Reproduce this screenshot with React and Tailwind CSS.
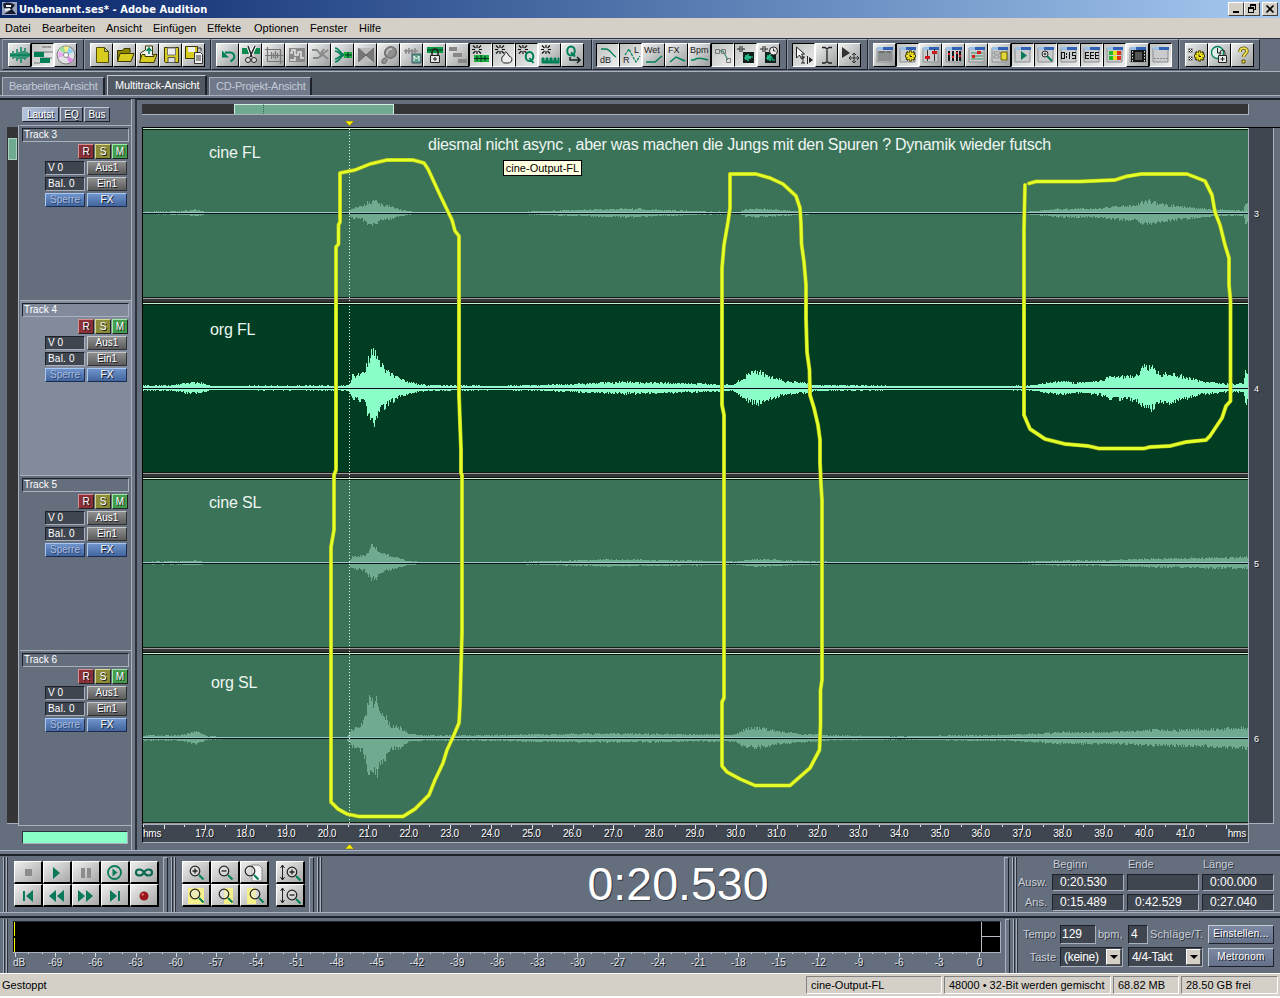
import React from "react";

const SUNK = "border border-t-[#1d2129] border-l-[#1d2129] border-b-[#a9b1bf] border-r-[#a9b1bf]";
const RAISED = "border border-t-[#c3cad6] border-l-[#c3cad6] border-b-[#1d2129] border-r-[#1d2129]";
const SHADOW = "[text-shadow:1px_1px_0_#15181f]";

/* ---------- toolbar glyphs, 22 x 22 grid ---------- */
const G = "#008058";
const win = (
  <>
    <path d="M3 4h15v14H3z" fill="#c9cbcc" stroke="#8a8d90" />
    <path d="M3 3h16v3H3z" fill="#2f62b4" />
    <path d="M3 3h6v3H3z" fill="#9cc0e8" />
  </>
);
const star = <path d="M7 1v3M7 7v3M2 5.500h3M9 5.500h3M3 1.500l2.500 2.500M8.500 7l2.500 2.500M11 1.500 8.500 4M5.500 7 3 9.500" stroke="#111" strokeWidth="1.200" />;
const gear = (
  <g>
    <path d="M13.500 6.500v11M8 12h11M9.500 8l8 8M17.500 8l-8 8" stroke="#3c3a00" strokeWidth="3" />
    <path d="M13.500 7.500v9M9 12h9M10.500 9l6 6M16.500 9l-6 6" stroke="#f0e020" strokeWidth="1.800" />
    <path d="M13 10.500v2h2" stroke="#222" />
  </g>
);
const GLYPHS = {
  wave: <path d="M2 9v4M4 7v8M6 9v5M8 5v12M10 8v7M12 3v16M14 7v8M16 4v12M18 8v6M20 9v4M1 11h20" stroke={G} strokeWidth="1.400" />,
  multi: (
    <>
      <path d="M10 3h9M2 8h19M8 14h12M2 19h6" stroke="#777" />
      <path d="M2 8h10v5H2zM8 14h10v5H8z" fill={G} />
      <path d="M11 2h3v2h-3zM16 2h3v2h-3z" fill="#999" />
    </>
  ),
  cd: (
    <>
      <circle cx="11" cy="11" r="9" fill="#dfe3e6" stroke="#777" />
      <path d="M11 11 4 5.500A9 9 0 0 1 9 2.500z" fill="#9be09b" />
      <path d="M11 11 9 2.500h5z" fill="#f7f07a" />
      <path d="m11 11 7.500 4.500A9 9 0 0 1 14 19z" fill="#e38be8" />
      <path d="m11 11-7.500-4v7z" fill="#e7a7f3" />
      <path d="m11 11 3-8 5 5z" fill="#8ed2f0" />
      <circle cx="11" cy="11" r="2.500" fill="#fff" stroke="#888" />
    </>
  ),
  neu: <path d="M5.500 3.500h8l4 4v11h-12zM13.500 3.500v4h4" fill="#d8cc20" stroke="#544e00" />,
  open: (
    <>
      <path d="M3.500 17V6.500h5l1.500-2h6v4" fill="#8f8600" stroke="#3a3600" />
      <path d="M3.500 17.500 6 9.500h14l-3 8z" fill="#d8cc20" stroke="#3a3600" />
    </>
  ),
  openup: (
    <>
      <path d="M3.500 17V9l5-3v-4h7v9h4" fill="#f4f4f4" stroke="#3a3600" />
      <path d="M12 10V4m-2.500 3L12 4l2.500 3" stroke={G} strokeWidth="1.500" />
      <path d="M2.500 18.500 5 10.500h3v2h9v-2h3l-3 8z" fill="#d8cc20" stroke="#3a3600" />
    </>
  ),
  save: (
    <>
      <path d="M4.500 3.500h14v15h-13l-1-1z" fill="#d8cc20" stroke="#3a3600" />
      <path d="M7.500 4v7h8V4z" fill="#eee" stroke="#777" />
      <path d="M8 13.500h7v5H8z" fill="#ddd" stroke="#555" />
    </>
  ),
  saveas: (
    <>
      <path d="M2.500 2.500h12v12h-12z" fill="#d8cc20" stroke="#3a3600" />
      <path d="M5 3h7v5H5z" fill="#eee" />
      <path d="M11.500 8.500h6l2 2v9h-8z" fill="#f4f4f4" stroke="#333" />
      <path d="M13 12h5M13 14h5M13 16h5M15 4h3v3" stroke="#333" />
    </>
  ),
  undo: (
    <>
      <path d="M8 8.500h5.500a4 4 0 0 1 3 6.500l-3 2.500" stroke={G} strokeWidth="2" />
      <path d="M5 6.500v7h7z" fill={G} />
    </>
  ),
  cut: (
    <>
      <path d="M2 4h7v6H2zM14 4h6v6h-6z" fill="#0b8a4f" />
      <path d="m8 2 4 11M15 2l-5 11" stroke="#fff" strokeWidth="3.500" />
      <path d="m8 2 4 11M15 2l-5 11" stroke="#222" strokeWidth="1.500" />
      <circle cx="8" cy="16" r="2.500" fill="#ddd" stroke="#222" />
      <circle cx="14" cy="16" r="2.500" fill="#ddd" stroke="#222" />
    </>
  ),
  trim: <path d="M2 5.500h15.500V20M4.500 3v14.500H20M2 11.500h18M8.500 8v7M10.500 9v5M12.500 7v8M14.500 9v5" stroke="#777" strokeWidth="1.200" />,
  frame: (
    <>
      <path d="M3 4h16v14H3z" fill="#888" />
      <path d="M4 9h2V6h3v5h3V8h3v6h3M4 16h5v-3" stroke="#e4e4e4" strokeWidth="1.500" />
    </>
  ),
  curve: <path d="M3 6h5l4 5 7-5M4 14h4c3 0 4-3 6-3l5 4M12 9l3-4" stroke="#888" strokeWidth="1.800" />,
  merge: (
    <>
      <path d="M3 4c5 0 5 7 10 7M3 18c5 0 5-7 10-7M3 7c4 0 4 4 8 4M3 15c4 0 4-4 8-4" stroke={G} strokeWidth="1.600" />
      <path d="M12 8h8v6h-8z" fill="#1fae3f" />
      <path d="M13 11h7M16 8v6" stroke="#033" />
    </>
  ),
  cross: (
    <>
      <path d="M3 4h16v14H3z" fill="#bbb" />
      <path d="M3 4l8 7-8 7zM19 4l-8 7 8 7z" fill="#777" />
      <path d="M3 18 19 4M3 4l16 14" stroke="#666" />
    </>
  ),
  lens: (
    <>
      <path d="M8 14c-4 1-5 4-3 5s4-1 4-4" fill="#999" stroke="#777" strokeWidth="1.500" />
      <ellipse cx="12.500" cy="8.500" rx="6" ry="5.500" transform="rotate(-35 12.500 8.500)" fill="#8f8f8f" stroke="#707070" strokeWidth="1.500" />
      <path d="M9 10c0-3 2-5 5-5" stroke="#c8c8c8" strokeWidth="1.500" />
    </>
  ),
  mixm: (
    <>
      <path d="M3 7h14M5 5v5M8 4v6M11 5v5M14 4v5" stroke="#888" strokeWidth="1.500" />
      <path d="M11 10h9v9h-9z" fill="#5aa08a" stroke="#456" />
      <path d="M13 17v-5l2.500 3 2.500-3v5" stroke="#fff" />
    </>
  ),
  lock: (
    <>
      <path d="M3 3h16v6H3z" fill="#0b9a3f" />
      <path d="M3 6h16" stroke="#033" />
      <path d="M8 11V8a3 3 0 0 1 6 0v3" stroke="#222" strokeWidth="1.500" />
      <path d="M6.500 11.500h9v7h-9z" fill="#e6e6e6" stroke="#222" />
      <path d="M11 13v4M9 15h4" stroke="#222" />
    </>
  ),
  blocks: <path d="M2 3h8v4H2zM6 9h9v4H6zM11 15h9v4h-9z" fill="#888" />,
  snap1: <>{star}<path d="M4 11h15v7H4z" fill="#1fae3f" /><path d="M4 14.500h15M7 12v5M11 11v7M15 12v5" stroke="#032" /></>,
  snap2: <>{star}<path d="M10 12c3-1 1-5 3-4s2 3 3 4c4 1 4 7-1 7h-3c-4 0-4-5-2-7z" fill="#eee" stroke="#222" /></>,
  snapq: <>{star}<path d="M13.500 8c5 0 5 9 0 9s-5-9 0-9m0 6 4 5" stroke={G} strokeWidth="2" /></>,
  snap3: <>{star}<path d="M3 19v-5h2v3h2v-3h2v3h2v-3h2v3h2v-3h2v3h2v-3h1v5z" fill={G} stroke={G} /></>,
  q: (
    <>
      <path d="M9 2.500c5 0 5 9 0 9s-5-9 0-9m0 6 4 4" stroke={G} strokeWidth="2" />
      <path d="M8 13v3h10m-3-3 3 3-3 3" stroke="#122" strokeWidth="1.500" />
    </>
  ),
  db: <path d="M4 5h5c4 0 5 5 10 8" stroke={G} strokeWidth="1.300" />,
  rl: <path d="m5 11 4-6 4 8 3 5 4-6" stroke={G} strokeWidth="1.200" strokeDasharray="3 1" />,
  wet: <path d="M3 18h9l7-6" stroke={G} strokeWidth="1.500" />,
  fx: <path d="m4 18 6-5 9 4" stroke={G} strokeWidth="1.500" />,
  bpm: <path d="M2 16h3c3-3 8-2 14 0" stroke={G} strokeWidth="1.500" />,
  env: <><path d="M7 7h4l5 9" stroke={G} /><path d="M3.500 5.500h4v4h-4zM9.500 5.500h4v4h-4zM14.500 14.500h4v4h-4z" stroke="#777" /></>,
  clip: <><path d="M2 5h3m2 0h3M5 2v6M7 2v6" stroke="#222" /><path d="M8 8h11v11H8z" fill="#10201c" /><path d="M9 14h2v-3v5-3h2v-3v7-4h2v-1v3-2h3" stroke="#25d09a" /></>,
  clipc: (
    <>
      <path d="M2 5h3m2 0h3M5 2v6M7 2v6" stroke="#222" />
      <path d="M7 8h11v11H7z" fill="#10201c" />
      <path d="M8 14h2v-3v5-3h2v-3v7-4h2v3h3" stroke="#25d09a" />
      <circle cx="15.500" cy="7" r="4" fill="#eee" stroke="#222" />
      <path d="M15.500 4.500V7h2" stroke="#222" />
    </>
  ),
  hyb: (
    <>
      <path d="M3.500 3v11l3-3 2 4 2-1-2-4h3z" fill="#fff" stroke="#222" />
      <path d="M8 13h4m-2 0v6m-2 0h4M14.500 12v8" stroke="#222" />
      <path d="m16 13 4 3-4 3z" fill="#222" />
    </>
  ),
  ibeam: <path d="M6 3.500h3l2 1.500 2-1.500h3M11 4.500v14M6 19h3l2-1.500 2 1.500h3" stroke="#222" strokeWidth="1.300" />,
  move: (
    <>
      <path d="M3 3v11l8-5z" fill="#333" />
      <path d="M15 9v10M10 14h10m-7-3 2-2 2 2m-4 6 2 2 2-2m-5-5-2 2 2 2m6-4 2 2-2 2" stroke="#333" />
    </>
  ),
  w1: <>{win}<path d="M4 7h14v10H4z" fill="#8c8f90" /><path d="M5 8h6M13 8h4" stroke="#555" /></>,
  w2: <>{win}{gear}</>,
  w3: <>{win}<path d="M7.500 6v11M14.500 5v12" stroke="#333" /><path d="M5 12h5v3H5zM12 7h5v3h-5z" fill="#cc1818" /></>,
  w4: <>{win}<path d="M6 7v10M10 7v10M14 7v10M17 7v10" stroke="#181818" strokeWidth="2" /><path d="M5 10h2M9 13h2M13 9h2M16 12h2" stroke="#e02020" strokeWidth="2" /></>,
  w5: <>{win}<path d="M5 9h12M5 12h12M5 15h12" stroke="#3a8f6a" /><path d="M11 7h4v3h-4zM6 11h3v3H6z" fill="#d02020" /></>,
  w6: <>{win}<path d="M5 8h6v2H5zM5 12h5v2H5z" fill="#eee" stroke="#888" /><path d="M12 8h6v8h-6z" fill="#e2d838" stroke="#665f00" /></>,
  w7: <>{win}<path d="m9 7 6 4.500L9 16z" fill="#0a7a5a" /></>,
  w8: <>{win}<circle cx="10" cy="10" r="3" stroke="#222" fill="#eee" /><path d="M8.500 10h3M10 8.500v3" stroke="#222" /><path d="m12 12 5 5" stroke={G} strokeWidth="2" /></>,
  w9: (
    <>
      {win}
      <g fill="#111" shapeRendering="crispEdges">
        <path d="M3 8h4v7H3zM4 9v5h2V9z" fillRule="evenodd" />
        <path d="M8 9h1v2H8zM8 12h1v2H8zM11 8h1v7h-1zM14 8h4v1h-3v2h3v4h-4v-1h3v-2h-3z" />
      </g>
    </>
  ),
  w10: (
    <>
      {win}
      <path d="M4 8h4v1H4zM4 11h4v1H4zM4 14h4v1H4zM4 8h1v7H4zM9 8h4v1H9zM9 11h4v1H9zM9 14h4v1H9zM9 8h1v7H9zM14 8h4v1h-4zM14 11h4v1h-4zM14 14h4v1h-4zM14 8h1v7h-1z" fill="#111" shapeRendering="crispEdges" />
    </>
  ),
  w11: <>{win}<path d="M5 7h4v4H5zM5 12h4v4H5z" fill="#22b830" /><path d="M9 7h4v4H9zM9 12h4v4H9z" fill="#e8e020" /><path d="M13 7h4v4h-4zM13 12h4v4h-4z" fill="#e03020" /></>,
  w12: <>{win}<path d="M4 6h15v12H4z" fill="#151515" /><path d="M5.500 7v11M17.500 7v11" stroke="#ddd" strokeDasharray="1.500 1.500" /><path d="M8 8h7v8H8z" fill="#555" /></>,
  w13: <>{win}<path d="M4 14.500h14" stroke="#888" strokeDasharray="2 1" /></>,
  opt: <>{gear}<path d="M2.500 4.500h4v4h-4zM2.500 12.500h4v4h-4z" fill="#fff" stroke="#999" /><path d="m3 5 3 3M6 5 3 8M3 13l3 3M6 13l-3 3" stroke="#222" /></>,
  clocklock: (
    <>
      <circle cx="8.500" cy="8.500" r="6" fill="#dff0ec" stroke={G} strokeWidth="1.300" />
      <path d="M8.500 4v5h4" stroke="#222" />
      <path d="M11 11V8.500a2.500 2.500 0 0 1 5 0V11" stroke="#222" />
      <path d="M9.500 11.500h8v7h-8z" fill="#e6e6e6" stroke="#222" />
      <path d="M13.500 13v4M11.500 15h4" stroke="#222" />
    </>
  ),
  help: (
    <>
      <path d="M8 8c0-5 7-5 7-1 0 3-3.500 3-3.500 6" stroke="#5a5200" strokeWidth="3.400" />
      <path d="M8 8c0-5 7-5 7-1 0 3-3.500 3-3.500 6" stroke="#f0e45a" strokeWidth="1.800" />
      <path d="M10 16h3v3h-3z" fill="#f0e45a" stroke="#5a5200" />
    </>
  ),
};

const CAPTIONS = {
  db: ["dB", 3, 19], rl: ["L", 14, 9], wet: ["Wet", 1, 9], fx: ["FX", 2, 9], bpm: ["Bpm", 1, 9],
};

function ToolButton({ name, on }) {
  const cap = CAPTIONS[name];
  return (
    <div
      className={
        "h-[24px] w-[23px] border " +
        (on
          ? "border-t-black border-l-black border-b-white border-r-white bg-linear-to-br from-[#bfc1c1] to-[#ededed]"
          : "border-t-white border-l-white border-b-black border-r-black bg-linear-to-br from-[#f0f0f0] to-[#9c9fa0]")
      }
    >
      <svg viewBox="0 0 21 22" className="h-[22px] w-[21px]" fill="none">
        {GLYPHS[name]}
        {cap && <text x={cap[1]} y={cap[2]} fontSize="9" fontFamily="Liberation Sans, sans-serif" fill="#222">{cap[0]}</text>}
        {name === "rl" && <text x="3" y="19" fontSize="9" fontFamily="Liberation Sans, sans-serif" fill="#222">R</text>}
      </svg>
    </div>
  );
}

const GROUPS = [
  { w: "w-[82px] pl-[5px]", items: ["wave", "*multi", "cd"] },
  { w: "w-[127px] pl-[5px]", items: ["neu", "open", "openup", "save", "saveas"] },
  { w: "w-[381px] pl-[4px]", items: ["undo", "cut", "trim", "frame", "curve", "merge", "cross", "lens", "mixm", "lock", "blocks", "*snap1", "*snap2", "*snapq", "snap3", "q"] },
  { w: "w-[195px] pl-[3px]", items: ["*db", "*rl", "wet", "fx", "bpm", "*env", "*clip", "clipc"] },
  { w: "w-[81px] pl-[4px]", items: ["*hyb", "ibeam", "move"] },
  { w: "w-[311px] pl-[4px]", items: ["w1", "*w2", "w3", "w4", "w5", "w6", "*w7", "*w8", "*w9", "*w10", "*w11", "w12", "*w13"] },
  { w: "w-[81px] pl-[5px]", items: ["opt", "clocklock", "help"] },
];

/* ---------- waveforms ---------- */
const WAVES = [
  [[143, 1.5], [180, 2], [196, 4], [206, 1], [348, 1], [351, 6], [362, 8], [368, 13], [375, 14], [380, 10], [392, 7], [403, 3], [418, 1], [510, 1], [545, 2.5], [630, 5], [690, 2.5], [738, 1], [745, 4], [757, 5], [775, 4], [800, 2], [820, 1], [1020, 1], [1060, 5], [1095, 5], [1120, 8], [1135, 9], [1147, 15], [1158, 11], [1185, 7], [1210, 4], [1243, 3], [1245, 11], [1248, 11]],
  [[143, 3], [170, 3], [190, 6.5], [200, 6], [210, 2.5], [240, 2.5], [345, 3], [350, 6], [352, 14], [364, 17], [368, 34], [371, 43], [375, 41], [379, 29], [386, 22], [394, 14], [405, 9], [415, 5], [427, 3.5], [500, 2.5], [560, 4], [600, 6], [625, 7], [700, 5], [733, 3.5], [742, 12], [750, 17], [758, 19], [768, 14], [785, 8], [805, 6], [813, 3.5], [870, 3], [890, 2.5], [1010, 2.5], [1030, 3], [1060, 8], [1075, 6], [1100, 8], [1111, 14], [1125, 13], [1137, 16], [1143, 25], [1151, 26], [1160, 16], [1168, 18], [1185, 13], [1200, 8], [1225, 5], [1243, 5], [1245, 18], [1248, 18]],
  [[143, 1.5], [180, 2], [196, 3], [206, 1], [348, 1], [352, 7], [364, 9], [370, 19], [375, 21], [381, 11], [394, 7], [405, 3], [418, 1.5], [520, 1.5], [600, 4], [660, 3.5], [735, 2], [755, 4.5], [790, 3], [830, 1.5], [1020, 1.5], [1060, 3], [1100, 3], [1150, 5], [1210, 6], [1248, 7]],
  [[143, 3], [175, 3], [188, 5], [196, 8], [208, 2], [240, 1], [346, 1], [351, 10], [356, 12], [362, 16], [366, 32], [369, 45], [375, 45], [379, 37], [384, 28], [390, 14], [400, 12], [408, 5], [425, 3], [470, 3], [520, 4], [590, 5], [650, 5], [700, 4], [735, 4], [745, 11], [757, 12], [775, 8], [800, 5], [830, 3], [900, 2], [1020, 4], [1060, 7], [1100, 7], [1150, 9], [1200, 10], [1248, 12]],
];

function wavePath(env, seed) {
  let s = seed;
  const rnd = () => {
    s = (s * 1103515245 + 12345) % 2147483648;
    return s / 2147483648;
  };
  let k = 0;
  let d = "";
  for (let x = 143; x < 1248; x++) {
    while (k < env.length - 2 && x >= env[k + 1][0]) k++;
    const [x0, a] = env[k];
    const [x1, b] = env[k + 1];
    const v = a + ((b - a) * (x - x0)) / (x1 - x0);
    const up = Math.round(v * (0.66 + 0.34 * rnd()));
    const dn = Math.round(v * (0.62 + 0.36 * rnd()));
    if (up + dn > 0) d += `M${x - 143} ${85 - up}h1v${up + dn}h-1z`;
  }
  return d;
}

const TRACKS = [
  { name: "Track 3", label: "cine FL", at: "left-[66px] top-[15px]" },
  { name: "Track 4", label: "org FL", at: "left-[67px] top-[17px]", active: true },
  { name: "Track 5", label: "cine SL", at: "left-[66px] top-[15px]" },
  { name: "Track 6", label: "org SL", at: "left-[68px] top-[20px]" },
];

function TrackControls({ t }) {
  const btn = "flex h-[14px] w-[40px] items-center justify-center text-[10px] leading-none text-white";
  const grey = "border border-t-[#c8c8c8] border-l-[#c8c8c8] border-b-[#303030] border-r-[#303030] bg-linear-to-b from-[#8f8f8f] to-[#5c5c5c] ";
  const blue = "border border-t-[#a8c8f4] border-l-[#a8c8f4] border-b-[#1b2c50] border-r-[#1b2c50] bg-linear-to-b from-[#6f93cc] to-[#42659c] ";
  const sq = "flex h-[15px] w-[16px] items-center justify-center border border-b-[#222] border-r-[#222] text-[10px] leading-none text-white ";
  return (
    <div className={"h-[175px] border-t border-[#a9b1bf] pt-[2px] pl-[2px] " + (t.active ? "bg-[#818b9b]" : "bg-[#646e7c]")}>
      <div className={"flex h-[14px] w-[107px] items-center pl-[1px] text-[10px] leading-none text-white " + SUNK}>{t.name}</div>
      <div className={"mt-[2px] flex justify-end gap-[1px] pr-[3px] " + SHADOW}>
        <div className={sq + "border-t-[#d89090] border-l-[#d89090] bg-[#8c3038]"}>R</div>
        <div className={sq + "border-t-[#d8d890] border-l-[#d8d890] bg-[#8c8c38]"}>S</div>
        <div className={sq + "border-t-[#a0e8a8] border-l-[#a0e8a8] bg-[#449c4c]"}>M</div>
      </div>
      <div className="mt-[2px] ml-[23px] grid w-[82px] grid-cols-2 gap-x-[2px] gap-y-[2px]">
        <div className={"flex h-[14px] w-[40px] items-center bg-[#404650] pl-[2px] text-[10px] leading-none text-white " + SUNK}>V 0</div>
        <div className={btn + " " + grey + SHADOW}>Aus1</div>
        <div className={"flex h-[14px] w-[40px] items-center bg-[#404650] pl-[2px] text-[10px] leading-none tracking-[0.2px] whitespace-nowrap text-white " + SUNK}>Bal. 0</div>
        <div className={btn + " " + grey + SHADOW}>Ein1</div>
        <div className={btn + " " + blue}><span className="text-[#a9bbda] [text-shadow:1px_1px_0_#2c4a80]">Sperre</span></div>
        <div className={btn + " " + blue + SHADOW}>FX</div>
      </div>
    </div>
  );
}

function Lane({ t, i }) {
  return (
    <div className={"relative h-[175px] w-[1106px] overflow-hidden border-l border-black " + (t.active ? "bg-[#003d22]" : "bg-[#3b7359]")}>
      <svg className="block h-[175px] w-[1105px]" viewBox="0 0 1105 175" shapeRendering="crispEdges">
        <rect width="1105" height="1" fill="#c9f2cf" />
        <rect y="1" width="1105" height="1" fill="#0a140e" />
        <path d={wavePath(WAVES[i], 77 + i * 991)} fill={t.active ? "#8affc8" : "#70aa90"} />
        <rect y="84" width="1105" height="1" fill={t.active ? "#a6e8e4" : "#98c8d0"} />
        <rect y="85" width="1105" height="1" fill="#04140e" />
        <rect y="169" width="1105" height="1" fill="#101c16" />
        <rect y="170" width="1105" height="1" fill="#9a9a9a" />
        <rect y="171" width="1105" height="3" fill="#353537" />
        <rect y="174" width="1105" height="1" fill="#0a140e" />
      </svg>
      <span className={"absolute text-[16px] leading-[20px] tracking-[-0.15px] whitespace-nowrap text-[#eef6f2] " + t.at}>{t.label}</span>
    </div>
  );
}

const MARKS = [
  "M340 173 355 170 370 164 387 160H413L424 163 428 169 440 195 452 220 455 231 459 236V395L461 450V473L462 475V632L461 668 460 705 459 723 453 737 447 750 443 763 435 780 429 795 415 809 403 816.500H359L347 814 338 809 331 802V547L334 530V475L336 470V247L338.500 244V225L340 222Z",
  "M730 174H756L770 178 783 184 796 196 800 208 801 224 801.500 244 804 262 806 285V318L807 352 809.500 370 810 395 814 408 818 425 820 440V462L821 485 822 500V680L820.500 690V725L819.500 750 810 768 790 785.500H755L740 779 727 772 722 766V702L724 698V415L722 405V268L724 245 728 222 730 208Z",
  "M1029 183.500 1036 181.500H1080L1115 180 1126 176.500 1141 174H1187L1205 181 1212 195 1215 212 1220 225 1225 245 1229 258V285L1230.500 300V401L1226 406 1222 418 1210 436 1206 440 1186 442 1170 446 1150 447 1144 448.500H1099L1088 446 1065 444 1045 439 1030 429 1024 415V229L1025 185",
];

/* ---------- transport glyphs, 28 x 21 grid ---------- */
const mag = (inner) => (
  <>
    <circle cx="13" cy="9" r="4.800" fill="#e8e8e0" fillOpacity="0.500" stroke="#222" strokeWidth="1.200" />
    {inner && <path d={inner} stroke="#222" strokeWidth="1.300" />}
    <path d="m17 13 4.500 4.500" stroke={G} strokeWidth="2" />
  </>
);
const T = {
  stop: <path d="M11 7h7v7h-7z" fill="#8c8c8c" />,
  play: <path d="m10 5 7 6-7 6z" fill="#0a7a5a" />,
  pause: <path d="M9 6h4v10H9zM15 6h4v10h-4z" fill="#8c8c8c" />,
  playc: <><circle cx="13.500" cy="10.500" r="6.500" stroke="#0a7a5a" strokeWidth="1.800" /><path d="m11.500 6.500 5 4-5 4z" fill="#0a7a5a" /></>,
  loop: <path d="M14 10.500c-2-4-8-4-8 0s6 4 8 0 8-4 8 0-6 4-8 0z" stroke="#0a6a50" strokeWidth="2.200" />,
  begin: <path d="M9 6h2v10H9zM19 5v12l-7-6z" fill="#0a7a5a" />,
  rew: <path d="M13 5v12l-7-6zM21 5v12l-7-6z" fill="#0a7a5a" />,
  ffw: <path d="m6 5 7 6-7 6zM14 5l7 6-7 6z" fill="#0a7a5a" />,
  end: <path d="m9 5 7 6-7 6zM17 6h2v10h-2z" fill="#0a7a5a" />,
  rec: <><circle cx="14" cy="11" r="4.500" fill="#981818" /><circle cx="12.700" cy="9.500" r="1.200" fill="#e07070" /></>,
  zin: mag("M10.500 9h5M13 6.500v5"),
  zout: mag("M10.500 9h5"),
  zpage: <><path d="M12 3h7l3 3v13H12z" fill="#f6f6f6" stroke="#888" /><g transform="translate(-3 0)">{mag()}</g></>,
  zsel: <><path d="M6 3h16v16H6z" fill="#f5f08a" />{mag()}</>,
  zl: <><path d="M13 3h9v16h-9z" fill="#f5f08a" />{mag()}</>,
  zr: <><path d="M7 3h9v16H7z" fill="#f5f08a" /><g transform="translate(2 0)">{mag()}</g></>,
  vin: <><path d="M6.500 4v14M4.500 6l2-3 2 3m-4 9 2 3 2-3" stroke="#222" /><g transform="translate(3 1)">{mag("M10.500 9h5M13 6.500v5")}</g></>,
  vout: <><path d="M6.500 4v14M4.500 6l2-3 2 3m-4 9 2 3 2-3" stroke="#222" /><g transform="translate(3 1)">{mag("M10.500 9h5")}</g></>,
};

function Pad({ name }) {
  return (
    <div className="h-[23px] w-[29px] border-t border-l border-r-2 border-b-2 border-t-white border-l-white border-r-black border-b-black bg-linear-to-br from-[#eeeeee] to-[#a8a8a8]">
      <svg viewBox="1 0 26 20" className="h-[20px] w-[26px]" fill="none">{T[name]}</svg>
    </div>
  );
}

const Grip = () => (
  <div className="flex gap-[1px]">
    <div className="w-[2px] border-l border-[#a9b1bf] bg-[#2c313b]" />
    <div className="w-[2px] border-l border-[#a9b1bf] bg-[#2c313b]" />
  </div>
);
const Splitter = () => <div className="w-[5px] border-x border-t border-l-[#a9b1bf] border-t-[#a9b1bf] border-r-[#1d2129] bg-[#6d7787]" />;

const Field = ({ children, className }) => (
  <div className={"flex items-center bg-[#404650] leading-none text-white " + SUNK + " " + className}>{children}</div>
);

function Combo({ children, className }) {
  return (
    <div className={"flex h-[20px] items-center justify-between bg-[#404650] pr-[1px] pl-[3px] text-[12px] leading-none tracking-[-0.3px] text-white " + SUNK + " " + className}>
      <span>{children}</span>
      <div className="flex h-[16px] w-[15px] items-center justify-center border border-t-white border-l-white border-r-[#555] border-b-[#555] bg-[#d4d0c8]">
        <svg viewBox="0 0 8 4" className="h-[4px] w-[8px]"><path d="M0 0h8L4 4z" fill="#000" /></svg>
      </div>
    </div>
  );
}

const RULER = Array.from({ length: 25 }, (_, i) => 17 + i);
const DBS = Array.from({ length: 24 }, (_, i) => i * 3 - 69);
const MENU = [["Datei", "w-[37px]"], ["Bearbeiten", "w-[64px]"], ["Ansicht", "w-[47px]"], ["Einfügen", "w-[54px]"], ["Effekte", "w-[47px]"], ["Optionen", "w-[56px]"], ["Fenster", "w-[49px]"], ["Hilfe", "w-[40px]"]];
const lbl = "text-[11px] leading-none text-[#c9ced8] [text-shadow:1px_1px_0_#30353f] whitespace-nowrap";
const wbtn = "flex h-[14px] items-center justify-center border border-t-white border-l-white border-r-[#404040] border-b-[#404040] bg-[#d4d0c8]";

export default function App() {
  return (
    <div className="h-[998px] w-[1280px] overflow-hidden bg-[#646e7c] font-['Liberation_Sans',Arial,sans-serif]">
      {/* title bar */}
      <div className="flex h-[18px] items-center bg-linear-to-r from-[#0a246a] to-[#a6caf0] pl-[2px]">
        <svg viewBox="0 0 16 16" className="h-[16px] w-[16px]">
          <rect y="1" width="15" height="13" fill="#9aa4bc" />
          <path d="M1 3c4-3 9-1 12 1l-3 4-8-1zM2 13l8-5 4 5z" fill="#151a2c" />
          <path d="M4 5h5M3 9l5-1" stroke="#f2f2f2" strokeWidth="2" />
        </svg>
        <span className="ml-[1px] w-[189px] font-['DejaVu_Sans_Condensed','DejaVu_Sans',sans-serif] text-[11px] leading-none font-bold tracking-[0.08px] whitespace-nowrap text-white">Unbenannt.ses* - Adobe Audition</span>
        <div className="mr-[2px] ml-auto flex">
          <div className={wbtn + " w-[16px]"}><svg viewBox="0 0 10 10" className="h-[10px] w-[10px]"><path d="M2 7h6v2H2z" /></svg></div>
          <div className={wbtn + " w-[16px]"}>
            <svg viewBox="0 0 10 10" className="h-[10px] w-[10px]" fill="#000" shapeRendering="crispEdges">
              <path d="M3 0h6v6H7V5h1V2H4v1H3zM1 3h6v6H1zM2 5v3h4V5z" fillRule="evenodd" />
            </svg>
          </div>
          <div className={wbtn + " ml-[2px] w-[16px]"}><svg viewBox="0 0 10 10" className="h-[10px] w-[10px]"><path d="m1.500 1.500 7 7m0-7-7 7" stroke="#000" strokeWidth="1.700" /></svg></div>
        </div>
      </div>

      {/* menu */}
      <div className="flex h-[20px] items-center bg-[#d4d0c8] pl-[5px] text-[11px] leading-none text-black">
        {MENU.map(([m, w]) => <span key={m} className={w + " whitespace-nowrap"}>{m}</span>)}
      </div>

      {/* tool bar */}
      <div className="flex h-[33px] border-t border-[#2c313b] pl-[2px]">
        {GROUPS.map((g, i) => (
          <div key={i} className={"flex h-[31px] border-t border-l border-r border-b border-t-[#a9b1bf] border-l-[#8d96a6] border-b-[#1d2129] border-r-[#1d2129] pt-[3px] " + g.w}>
            {g.items.map((n) => <ToolButton key={n} name={n.replace("*", "")} on={n[0] === "*"} />)}
          </div>
        ))}
      </div>

      {/* view tabs */}
      <div className="h-[28px] border-t border-[#a9b1bf] bg-[#505862] pt-[3px]">
        <div className="flex h-[20px] items-end pl-[2px] text-[11px] leading-none whitespace-nowrap">
          <div className="flex h-[18px] w-[103px] items-center border-t border-r-2 border-l border-t-[#a9b1bf] border-l-[#a9b1bf] border-r-[#1d2129] bg-[#6f7989] pl-[6px] tracking-[-0.25px] text-[#c3cad6]">Bearbeiten-Ansicht</div>
          <div className="ml-[2px] flex h-[20px] w-[100px] items-center border-t border-r-2 border-l border-t-[#c3cad6] border-l-[#c3cad6] border-r-[#1d2129] bg-[#505862] pl-[7px] tracking-[-0.13px] text-white">Multitrack-Ansicht</div>
          <div className="ml-[2px] flex h-[18px] w-[103px] items-center border-t border-r-2 border-l border-t-[#a9b1bf] border-l-[#a9b1bf] border-r-[#1d2129] bg-[#6f7989] pl-[6px] tracking-[-0.22px] text-[#c3cad6]">CD-Projekt-Ansicht</div>
        </div>
        <div className="h-[5px] border-t border-b-2 border-t-[#a9b1bf] border-b-[#1d2129] bg-[#6d7787]" />
      </div>

      {/* session */}
      <div className="flex h-[751px]">
        <div className="w-[131px]">
          <div className={"flex h-[26px] gap-[1px] pt-[8px] pl-[22px] text-[10px] leading-none text-white " + SHADOW}>
            <div className={"flex h-[15px] w-[37px] items-center justify-center bg-linear-to-r from-[#b4c3dc] to-[#8e9db8] " + RAISED}>Lautst</div>
            <div className={"flex h-[15px] w-[23px] items-center justify-center bg-[#727c8e] " + RAISED}>EQ</div>
            <div className={"flex h-[15px] w-[26px] items-center justify-center bg-[#727c8e] " + RAISED}>Bus</div>
          </div>
          <div className="flex">
            <div className="mt-[2px] ml-[7px] h-[697px] w-[11px] border-b border-[#a9b1bf] bg-[#353537] pt-[11px] pl-[1px]">
              <div className="h-[22px] w-[9px] border border-[#a8d4c0] bg-[#70aa90]" />
            </div>
            <div className="w-[113px] border-b border-l border-[#a9b1bf] pl-px">
              {TRACKS.map((t) => <TrackControls key={t.name} t={t} />)}
            </div>
          </div>
          <div className="mt-[5px] ml-[22px] h-[13px] w-[106px] border border-t-[#2c313b] border-l-[#2c313b] border-r-[#a9b1bf] border-b-[#a9b1bf] bg-[#8affc8]" />
        </div>
        <div className="h-[751px] w-[6px] border-l border-r-2 border-l-[#a9b1bf] border-r-[#2c313b] bg-[#6d7787]" />
        <div className="w-[1143px] pl-[5px]">
          <div className="mt-[5px] flex h-[11px] w-[1107px] border-r border-b border-[#a9b1bf] bg-[#353537] pl-[92px]">
            <div className="h-[10px] w-[29px] border-t border-l border-[#d0efe0] bg-[#70aa90]" />
            <div className="h-[10px] w-[131px] border-t border-r border-l border-t-[#d0efe0] border-r-[#d0efe0] border-l-[#2d6e50] bg-[#70aa90] [border-left-style:dotted]" />
          </div>
          <div className="flex h-[12px] items-end pl-[202px]">
            <svg viewBox="0 0 11 6" className="h-[6px] w-[11px]"><path d="M1 0h9L5.500 5z" fill="#ffee00" stroke="#55500a" strokeWidth="0.500" /></svg>
          </div>
          <div className="relative flex h-[697px] border-t border-black">
            <div className="h-[696px] w-[1106px] overflow-hidden">
              {TRACKS.map((t, i) => <Lane key={t.name} t={t} i={i} />)}
            </div>
            <div className={"h-[696px] w-[26px] border-x border-b border-[#a9b1bf] bg-[#404650] text-[9px] leading-none text-white " + SHADOW}>
              {[3, 4, 5, 6].map((n) => <div key={n} className="h-[175px] pt-[82px] pl-[5px]">{n}</div>)}
            </div>
            <svg className="absolute top-0 left-0 h-[696px] w-[1106px]" viewBox="142 128 1106 696" fill="none">
              <path d="M349.500 129V823" stroke="#e8ffe8" strokeDasharray="1 2" shapeRendering="crispEdges" />
              {MARKS.map((d, i) => (
                <g key={i} strokeLinejoin="round" strokeLinecap="round">
                  <path d={d} stroke="#a8b820" strokeWidth="4" />
                  <path d={d} stroke="#e4ff28" strokeWidth="2.800" />
                </g>
              ))}
            </svg>
            <span className="absolute top-[7px] left-[286px] w-[623px] text-[16px] leading-[20px] tracking-[-0.245px] whitespace-nowrap text-[#eef6f2]">diesmal nicht async , aber was machen die Jungs mit den Spuren ? Dynamik wieder futsch</span>
            <div className="absolute top-[32px] left-[361px] flex h-[16px] w-[79px] items-center justify-center border border-black bg-[#ffffe1] text-[11px] leading-none whitespace-nowrap text-black">cine-Output-FL</div>
          </div>
          <div className="h-[19px] w-[1107px] border-t border-r border-b border-l border-[#a9b1bf] border-l-black bg-[#404650]">
            <div className={"relative flex h-[17px] items-end pb-[3px] text-[10px] leading-none text-white " + SHADOW}>
              <svg className="absolute top-0 left-0 h-[4px] w-[1105px]" viewBox="0 0 1105 4" shapeRendering="crispEdges">
                {Array.from({ length: 54 }, (_, i) => <rect key={i} x={Math.round(0.4 + i * 20.435)} width="1" height={i % 2 ? 4 : 2} fill="#e0e4ea" />)}
              </svg>
              <span className="w-[41px] tracking-[-0.2px]">hms</span>
              {RULER.map((n) => <span key={n} className="w-[40.87px] text-center tracking-[-0.3px]">{n}.0</span>)}
              <span className="ml-auto pr-[2px] tracking-[-0.2px]">hms</span>
            </div>
          </div>
          <div className="flex h-[8px] items-start pl-[202px]">
            <svg viewBox="0 0 11 6" className="h-[6px] w-[11px]"><path d="M1 6h9L5.500 1z" fill="#ffee00" stroke="#55500a" strokeWidth="0.500" /></svg>
          </div>
        </div>
      </div>
      <div className="h-[6px] border-t border-b-2 border-t-[#a9b1bf] border-b-[#1d2129] bg-[#6d7787]" />

      {/* transport row */}
      <div className="flex h-[56px] pt-[1px] pl-[3px]">
        <Grip />
        <div className="mt-[4px] ml-[6px] grid h-[46px] w-[145px] grid-cols-5">
          {["stop", "play", "pause", "playc", "loop", "begin", "rew", "ffw", "end", "rec"].map((n) => <Pad key={n} name={n} />)}
        </div>
        <div className="ml-[4px] flex"><Splitter /></div>
        <div className="ml-[3px] flex"><Grip /></div>
        <div className="mt-[4px] ml-[6px] grid h-[46px] w-[87px] grid-cols-3">
          {["zin", "zout", "zpage", "zsel", "zl", "zr"].map((n) => <Pad key={n} name={n} />)}
        </div>
        <div className="mt-[4px] ml-[7px] h-[46px] w-[29px]">
          <Pad name="vin" />
          <Pad name="vout" />
        </div>
        <div className="ml-[4px] flex"><Splitter /></div>
        <div className="ml-[3px] flex"><Grip /></div>
        <div className="flex w-[682px] items-center justify-center pl-[30px] text-[46.5px] leading-none text-white [text-shadow:1px_1px_0_#30353f]">0:20.530</div>
        <Splitter />
        <div className="ml-[3px] flex"><Grip /></div>
        <div className="ml-[1px] w-[258px]">
          <div className={"flex h-[15px] items-center pl-[35px] " + lbl}>
            <span className="w-[75px]">Beginn</span>
            <span className="w-[75px]">Ende</span>
            <span>Länge</span>
          </div>
          {[["Ausw.", "0:20.530", "", "0:00.000"], ["Ans.", "0:15.489", "0:42.529", "0:27.040"]].map(([a, b, c, d]) => (
            <div key={a} className="flex h-[20px] items-center gap-[3px]">
              <span className={"w-[31px] pr-[2px] text-right " + lbl}>{a}</span>
              <Field className="h-[17px] w-[72px] pl-[7px] text-[12px]">{b}</Field>
              <Field className="h-[17px] w-[72px] pl-[7px] text-[12px]">{c}</Field>
              <Field className="h-[17px] w-[72px] pl-[7px] text-[12px]">{d}</Field>
            </div>
          ))}
        </div>
      </div>
      <div className="h-[6px] border-t border-b-2 border-t-[#a9b1bf] border-b-[#1d2129] bg-[#6d7787]" />

      {/* level meter row */}
      <div className="flex h-[55px] pt-[1px] pl-[3px]">
        <Grip />
        <div className="ml-[5px] w-[988px] pt-[2px]">
          <div className="flex h-[32px] border-t border-r border-b border-[#a9b1bf] border-t-[#1d2129] bg-black">
            <div className="ml-[1px] flex w-[1px] flex-col justify-between bg-black">
              <div className="h-[14px] bg-[#ffff00]" />
              <div className="h-[14px] bg-[#ffff00]" />
            </div>
            <div className="ml-auto w-[19px] border-l border-[#b8bcc4]">
              <div className="h-[15px] border-b border-[#b8bcc4]" />
            </div>
          </div>
          <svg className="block h-[4px] w-[988px]" viewBox="0 0 988 4" shapeRendering="crispEdges">
            {Array.from({ length: 73 }, (_, i) => <rect key={i} x={Math.round(2 + i * 13.39)} width="1" height={i % 3 ? 1 : 4} fill="#d5d9e0" />)}
          </svg>
          <div className={"flex pt-[1px] text-[10px] leading-none text-[#e2e5ea] " + SHADOW}>
            <span className="w-[22px] shrink-0">dB</span>
            {DBS.map((n) => <span key={n} className="w-[40.19px] shrink-0 text-center">{n}</span>)}
          </div>
        </div>
        <div className="ml-[4px] flex"><Splitter /></div>
        <div className="ml-[3px] flex"><Grip /></div>
        <div className="pt-[5px] pl-[1px]">
          <div className="flex h-[20px] items-center">
            <span className={"w-[38px] pr-[1px] text-right " + lbl}>Tempo</span>
            <Field className="ml-[3px] h-[19px] w-[36px] pl-[1px] text-[12px]">129</Field>
            <span className={"ml-[2px] w-[30px] " + lbl}>bpm,</span>
            <Field className="h-[19px] w-[20px] pl-[2px] text-[12px]">4</Field>
            <span className={"ml-[2px] w-[57px] tracking-[0.2px] " + lbl}>Schläge/T.</span>
            <div className={"ml-[1px] flex h-[19px] w-[66px] items-center justify-center bg-linear-to-b from-[#7d88a2] to-[#657089] text-[10px] leading-none tracking-[0.3px] text-white " + RAISED + " " + SHADOW}>Einstellen...</div>
          </div>
          <div className="mt-[3px] flex h-[20px] items-center">
            <span className={"w-[38px] pr-[1px] text-right " + lbl}>Taste</span>
            <Combo className="ml-[3px] w-[63px]">(keine)</Combo>
            <Combo className="ml-[5px] w-[75px]">4/4-Takt</Combo>
            <div className={"ml-[5px] flex h-[19px] w-[66px] items-center justify-center bg-linear-to-b from-[#7d88a2] to-[#657089] text-[10px] leading-none tracking-[0.3px] text-white " + RAISED + " " + SHADOW}>Metronom</div>
          </div>
        </div>
      </div>

      {/* status bar */}
      <div className="flex h-[25px] gap-[2px] border-t border-b-2 border-white bg-[#d4d0c8] pt-[2px] pb-[2px] text-[11px] leading-none whitespace-nowrap text-black">
        <div className="flex w-[804px] items-center pl-[2px]">Gestoppt</div>
        {[["cine-Output-FL", "w-[136px]"], ["48000 • 32-Bit werden gemischt", "w-[167px]"], ["68.82 MB", "w-[66px]"], ["28.50 GB frei", "w-[97px]"]].map(([s, w]) => (
          <div key={s} className={"flex items-center border border-t-[#808080] border-l-[#808080] border-r-white border-b-white pl-[4px] " + w}>{s}</div>
        ))}
      </div>
    </div>
  );
}
